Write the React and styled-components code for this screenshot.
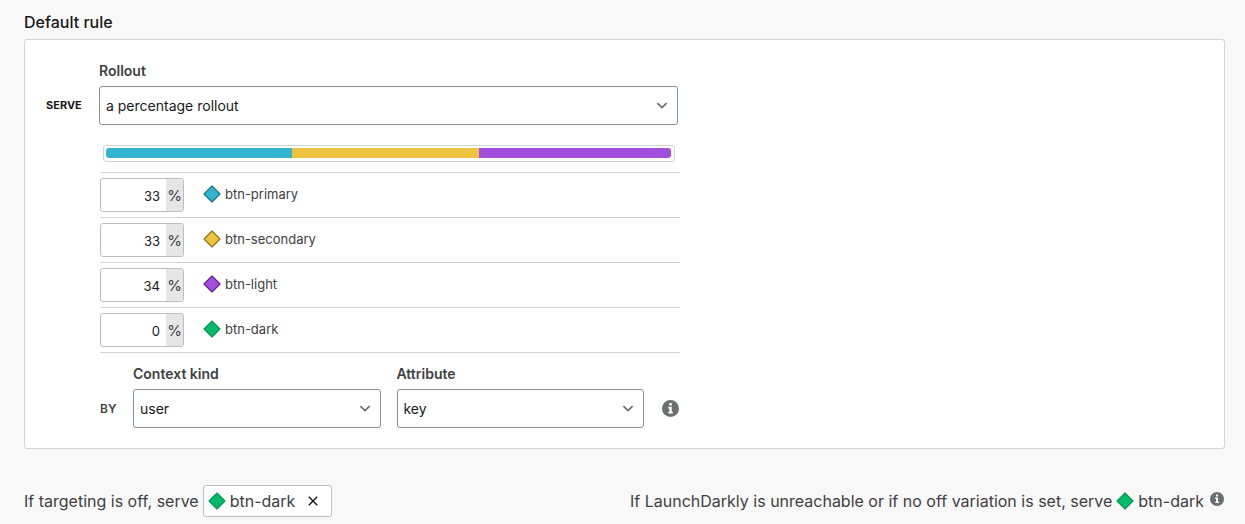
import React, { useState } from "react";
import styled, { createGlobalStyle } from "styled-components";

const GlobalStyle = createGlobalStyle`
  *, *::before, *::after { box-sizing: border-box; }
  body {
    margin: 0;
    background: #f8f8f8;
    color: #414042;
    font-family: Inter, "Liberation Sans", sans-serif;
    font-size: 16px;
    line-height: 20px;
  }
  button, input, select { font: inherit; color: inherit; }
`;

const Page = styled.main`
  padding: 12px 20px 0 24px;
`;

const Title = styled.h2`
  margin: 0 0 7px;
  font-size: 16px;
  font-weight: 500;
  line-height: 20px;
  color: #191919;
`;

const Card = styled.section`
  display: flex;
  gap: 16px;
  padding: 20px 20px 20px 21px;
  background: #fff;
  border: 1px solid #d1d3d4;
  border-radius: 3px;
`;

const Keyword = styled.span`
  display: block;
  flex: none;
  width: ${(p) => p.$width}px;
  font-size: ${(p) => p.$size}px;
  font-weight: ${(p) => p.$weight};
  line-height: 39px;
  color: ${(p) => p.$color};
`;

const ServeSlot = styled.div`
  padding-top: 26px;
`;

const Content = styled.div`
  flex: 0 1 581px;
  min-width: 0;
`;

const Field = styled.div`
  flex: 1 1 0;
  min-width: 0;
  margin-right: ${(p) => p.$inset || 0}px;
`;

const Label = styled.label`
  display: block;
  margin-bottom: 5px;
  padding-top: 1px;
  font-size: 14px;
  font-weight: 600;
  line-height: 20px;
`;

const SelectBox = styled.div`
  position: relative;

  svg {
    position: absolute;
    top: 16px;
    right: 10px;
    pointer-events: none;
  }
`;

const Select = styled.select`
  display: block;
  width: 100%;
  height: 39px;
  padding: 0 32px 0 6px;
  appearance: none;
  background: #fff;
  border: 1px solid #8791a0;
  border-radius: 3px;
  font-size: 14px;
  color: #191919;
`;

const Track = styled.div`
  display: flex;
  height: 17px;
  margin: 20px 5px 10px 4px;
  padding: 2px;
  background: #fff;
  border: 1px solid #d1d3d4;
  border-radius: 3px;
`;

const Segments = styled.div`
  display: flex;
  flex: 1;
  height: 10px;
  margin-right: 1px;
  border-radius: 3px;
  overflow: hidden;
`;

const Segment = styled.div`
  background: ${(p) => p.$color};
`;

const Rows = styled.ul`
  margin: 0 0 0 1px;
  padding: 0;
  list-style: none;
  border-top: 1px solid #d1d3d4;
`;

const Row = styled.li`
  display: flex;
  align-items: center;
  gap: 19px;
  height: 45px;
  border-bottom: 1px solid #d1d3d4;
`;

const Percent = styled.div`
  display: flex;
  width: 84px;
  height: 34px;
  background: #fff;
  border: 1px solid #bcbec0;
  border-radius: 3px;
  overflow: hidden;
`;

const PercentInput = styled.input`
  flex: 1;
  min-width: 0;
  padding: 1px 6px 0 0;
  border: 0;
  outline: 0;
  background: transparent;
  font-size: 13px;
  text-align: right;
  color: #191919;
`;

const Unit = styled.span`
  width: 17px;
  background: #e6e6e6;
  font-size: 15px;
  line-height: 33px;
  text-align: center;
`;

const Variation = styled.span`
  display: inline-flex;
  align-items: center;
  gap: 4px;
`;

const RowVariation = styled(Variation).attrs({ as: "label" })`
  padding-bottom: 2px;
  font-size: 13px;
`;

const ContextRow = styled.div`
  display: flex;
  align-items: flex-end;
  gap: 16px;
  margin: 10px 0 0 1px;
`;

const InfoButton = styled.button`
  display: flex;
  align-items: center;
  padding: 0 1px 0 2px;
  border: 0;
  background: none;
  color: #6d6e71;
`;

const FieldInfo = styled(InfoButton)`
  height: 39px;
`;

const FooterInfo = styled(InfoButton)`
  align-self: flex-start;
  height: 15px;
`;

const Footer = styled.footer`
  display: flex;
  justify-content: space-between;
  align-items: center;
  margin-top: 36px;
`;

const FooterText = styled.div`
  display: flex;
  align-items: center;
  gap: 4px;
`;

const Chip = styled.span`
  display: flex;
  align-items: center;
  gap: 13px;
  height: 32px;
  padding: 0 13px 0 4px;
  background: #fff;
  border: 1px solid #bcbec0;
  border-radius: 3px;
`;

const RemoveButton = styled.button`
  display: flex;
  padding: 0;
  border: 0;
  background: none;
  color: #191919;
`;

function Chevron() {
  return (
    <svg width="12" height="8" viewBox="0 0 12 8" fill="none" stroke="#6d6e71" strokeWidth="1.8" aria-hidden="true">
      <path d="M1.4 1.2 6 5.6 10.6 1.2" />
    </svg>
  );
}

function Diamond({ fill, edge }) {
  return (
    <svg width="18" height="18" viewBox="0 0 18 18" aria-hidden="true">
      <path d="M9 1 17 9 9 17 1 9Z" fill={fill} stroke={edge} strokeWidth="1.1" strokeLinejoin="round" />
    </svg>
  );
}

function Info({ size }) {
  return (
    <svg width={size} height={size} viewBox="0 0 16 16" aria-hidden="true">
      <circle cx="8" cy="8" r="8" fill="currentColor" />
      <path d="M6.8 2.8h2.4v2.4H6.8zM6 6.3h3.2v4.7h1v1.6H6V11h.9V7.9H6z" fill="#fff" />
    </svg>
  );
}

function Cross() {
  return (
    <svg width="10" height="10" viewBox="0 0 10 10" fill="none" stroke="currentColor" strokeWidth="1.4" aria-hidden="true">
      <path d="M.8.8 9.2 9.2M9.2.8.8 9.2" />
    </svg>
  );
}

function SelectField({ id, label, options, inset }) {
  return (
    <Field $inset={inset}>
      <Label htmlFor={id}>{label}</Label>
      <SelectBox>
        <Select id={id}>
          {options.map((o) => (
            <option key={o}>{o}</option>
          ))}
        </Select>
        <Chevron />
      </SelectBox>
    </Field>
  );
}

const initialVariations = [
  { name: "btn-primary", weight: 33, fill: "#33b5d1", edge: "#176f85" },
  { name: "btn-secondary", weight: 33, fill: "#edc340", edge: "#8f7014" },
  { name: "btn-light", weight: 34, fill: "#a34fde", edge: "#5d1b8c" },
  { name: "btn-dark", weight: 0, fill: "#06b969", edge: "#08954f" },
];

export default function App() {
  const [variations, setVariations] = useState(initialVariations);
  const off = variations[3];

  const setWeight = (name, value) =>
    setVariations((all) =>
      all.map((v) => (v.name === name ? { ...v, weight: Number(value) || 0 } : v))
    );

  return (
    <>
      <GlobalStyle />
      <Page>
        <Title>Default rule</Title>
        <Card>
          <ServeSlot>
            <Keyword $width={37} $size={11} $weight={700} $color="#191919">SERVE</Keyword>
          </ServeSlot>
          <Content>
            <SelectField id="rollout" label="Rollout" options={["a percentage rollout"]} inset={2} />
            <Track>
              <Segments>
                {variations.map((v) => (
                  <Segment key={v.name} $color={v.fill} style={{ width: `${v.weight}%` }} />
                ))}
              </Segments>
            </Track>
            <Rows>
              {variations.map((v) => (
                <Row key={v.name}>
                  <Percent>
                    <PercentInput
                      id={v.name}
                      inputMode="numeric"
                      value={v.weight}
                      onChange={(e) => setWeight(v.name, e.target.value)}
                    />
                    <Unit>%</Unit>
                  </Percent>
                  <RowVariation htmlFor={v.name}>
                    <Diamond fill={v.fill} edge={v.edge} />
                    {v.name}
                  </RowVariation>
                </Row>
              ))}
            </Rows>
            <ContextRow>
              <Keyword $width={17} $size={12} $weight={600} $color="#414042">BY</Keyword>
              <SelectField id="context-kind" label="Context kind" options={["user"]} />
              <SelectField id="attribute" label="Attribute" options={["key"]} />
              <FieldInfo type="button" aria-label="About rollout attributes">
                <Info size={17} />
              </FieldInfo>
            </ContextRow>
          </Content>
        </Card>
        <Footer>
          <FooterText>
            If targeting is off, serve
            <Chip>
              <Variation>
                <Diamond fill={off.fill} edge={off.edge} />
                {off.name}
              </Variation>
              <RemoveButton type="button" aria-label="Remove off variation">
                <Cross />
              </RemoveButton>
            </Chip>
          </FooterText>
          <FooterText>
            If LaunchDarkly is unreachable or if no off variation is set, serve
            <Variation>
              <Diamond fill={off.fill} edge={off.edge} />
              {off.name}
            </Variation>
            <FooterInfo type="button" aria-label="About the fallback value">
              <Info size={14} />
            </FooterInfo>
          </FooterText>
        </Footer>
      </Page>
    </>
  );
}
